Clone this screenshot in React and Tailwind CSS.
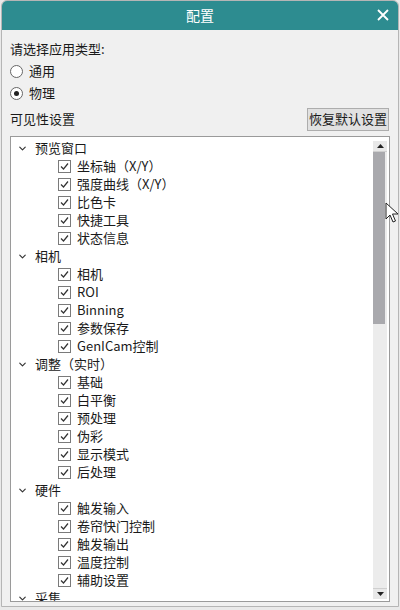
import { ChevronDown } from "lucide-react";

const font = { fontFamily: '"Noto Sans CJK SC", "Noto Sans", sans-serif' };

const groups = [
  { name: "预览窗口", items: ["坐标轴（X/Y）", "强度曲线（X/Y）", "比色卡", "快捷工具", "状态信息"] },
  { name: "相机", items: ["相机", "ROI", "Binning", "参数保存", "GenICam控制"] },
  { name: "调整（实时）", items: ["基础", "白平衡", "预处理", "伪彩", "显示模式", "后处理"] },
  { name: "硬件", items: ["触发输入", "卷帘快门控制", "触发输出", "温度控制", "辅助设置"] },
  { name: "采集", items: [] },
];

function CheckBox() {
  return <span className="w-[13px] h-[13px] border border-[#7a7a7a] bg-white flex items-center justify-center shrink-0">
      <svg width="9" height="9" viewBox="0 0 9 9" fill="none">
        <path d="M1 4.5 L3.5 7 L8 1.5" stroke="#333" strokeWidth="1.2" />
      </svg>
    </span>;
}

function Radio({ checked, label }) {
  return <div className="h-[22px] flex items-center gap-[6px] pl-[8px]">
      <span className="w-[13px] h-[13px] rounded-full border border-[#666] bg-white flex items-center justify-center">
        {checked && <span className="w-[5px] h-[5px] rounded-full bg-[#222]" />}
      </span>
      <span>{label}</span>
    </div>;
}

export default function App() {
  return <div className="w-[400px] h-[610px] bg-[#e9e9e9] text-[13px] text-[#1a1a1a] relative overflow-hidden" style={font}>
      <div className="h-[607px] mx-[1px] border border-[#b5b5b5] rounded-t-[6px] bg-[#f0f0f0] flex flex-col overflow-hidden">
        {/* title bar */}
        <div className="h-[29px] bg-[#2d8c90] flex items-center justify-center relative shrink-0">
          <span className="text-white text-[14px]">配置</span>
          <svg className="absolute right-[9px] top-[8px]" width="12" height="12" viewBox="0 0 12 12">
            <path d="M1 1 L11 11 M11 1 L1 11" stroke="white" strokeWidth="1.8" />
          </svg>
        </div>

        <div className="flex-1 flex flex-col pt-[10px]">
          <div className="h-[18px] flex items-center pl-[8px]">请选择应用类型:</div>
          <div className="mt-[2px]">
            <Radio label="通用" />
            <Radio checked label="物理" />
          </div>
          <div className="h-[26px] flex items-center justify-between pl-[8px] pr-[9px] mt-[2px]">
            <span>可见性设置</span>
            <button className="h-[23px] px-[1px] bg-[#e1e1e1] border border-[#adadad] text-[13px] text-[#1a1a1a]">恢复默认设置</button>
          </div>

          {/* tree */}
          <div className="mt-[4px] ml-[8px] mr-[8px] h-[466px] border border-[#9a9a9a] bg-white flex overflow-hidden">
            <div className="flex-1 pt-[2px] overflow-hidden">
              {groups.map((g) => <div key={g.name}>
                  <div className="h-[18px] flex items-center">
                    <ChevronDown className="w-[11px] h-[11px] ml-[6px] mr-[7px] text-[#333]" strokeWidth={2.5} />
                    <span>{g.name}</span>
                  </div>
                  {g.items.map((it) => <div key={it} className="h-[18px] flex items-center pl-[47px] gap-[6px]">
                      <CheckBox />
                      <span>{it}</span>
                    </div>)}
                </div>)}
            </div>
            <div className="w-[16px] pt-[4px] pb-[2px] pr-[2px] flex flex-col bg-white">
              <div className="h-[11px] bg-[#e8e8e8] border-b border-[#cfcfcf] flex items-center justify-center">
                <svg width="7" height="4" viewBox="0 0 7 4"><path d="M0 4 L3.5 0 L7 4 Z" fill="#222" /></svg>
              </div>
              <div className="flex-1 flex flex-col bg-[#ececec]">
                <div className="h-[172px] bg-[#a9a9ad] mr-[2px]" />
              </div>
              <div className="h-[11px] bg-[#e8e8e8] border-t border-[#cfcfcf] flex items-center justify-center">
                <svg width="7" height="4" viewBox="0 0 7 4"><path d="M0 0 L3.5 4 L7 0 Z" fill="#222" /></svg>
              </div>
            </div>
          </div>
        </div>
      </div>

      {/* mouse cursor */}
      <svg className="absolute left-[385px] top-[202px]" width="14" height="22" viewBox="0 0 14 22">
        <path d="M1 1 L1 17 L5 13 L8 20 L10.5 19 L7.5 12 L13 12 Z" fill="white" stroke="#222" strokeWidth="1" />
      </svg>
    </div>;
}
